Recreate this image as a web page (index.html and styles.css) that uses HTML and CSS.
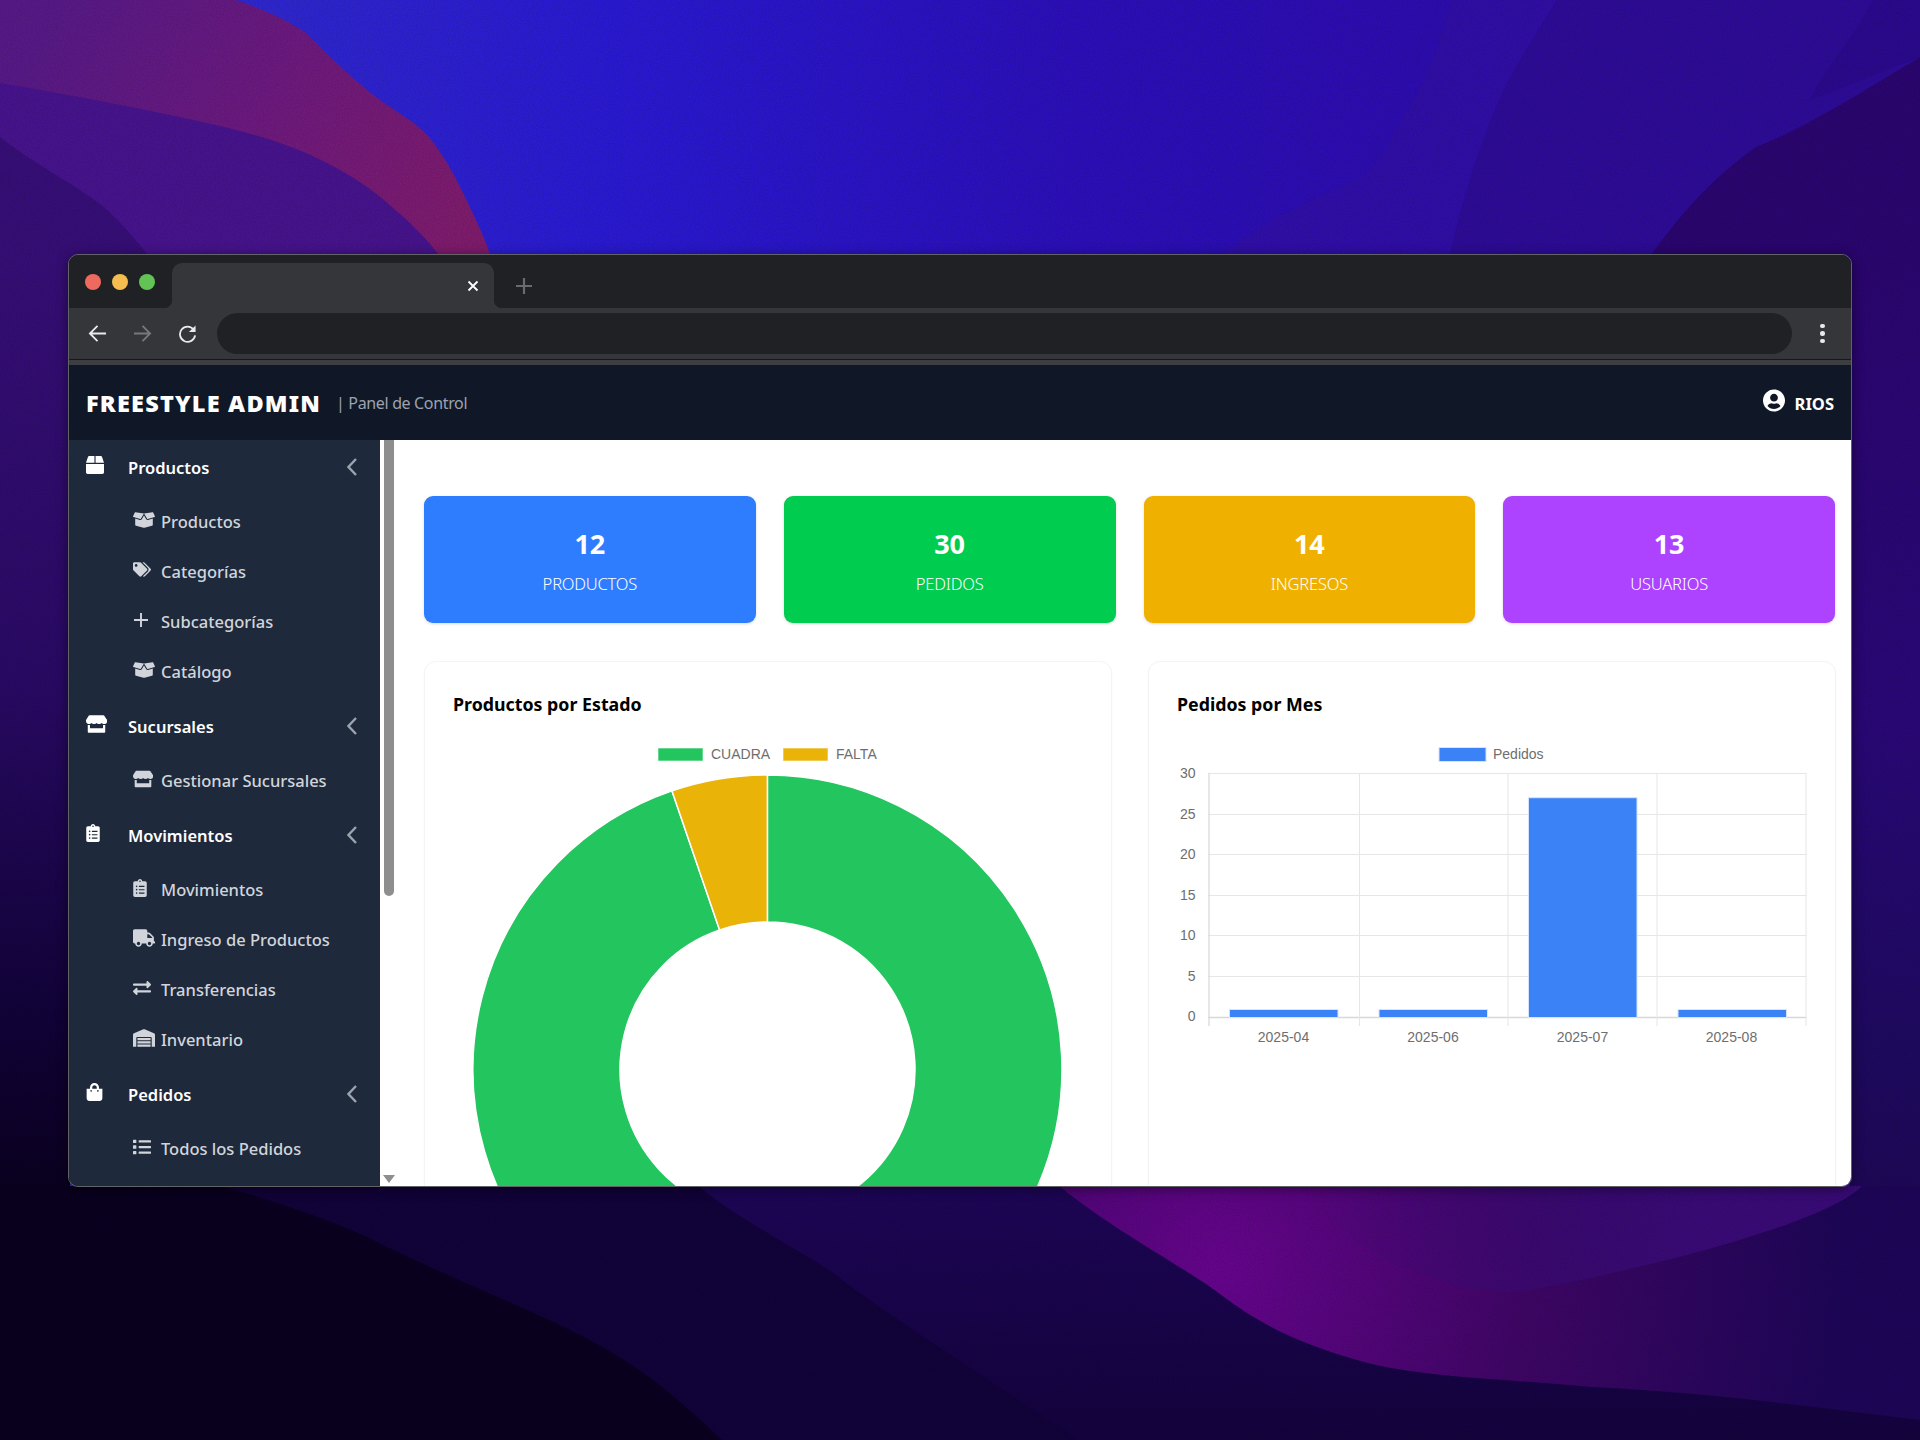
FILE: index.html
```html
<!DOCTYPE html>
<html lang="en">
<head>
  <meta charset="UTF-8">
  <meta name="viewport" content="width=device-width, initial-scale=1.0">
  <title>Freestyle Admin</title>
  <link rel="stylesheet" href="styles.css">
</head>
<body>
  <!-- icon sprite -->
  <svg class="sprite" xmlns="http://www.w3.org/2000/svg">
    <symbol id="i-box" viewBox="0 0 512 512"><path d="M509.5 184.6L458.9 32.8C452.4 13.2 434.1 0 413.4 0H272v192h238.7c-.4-2.5-.4-5-1.2-7.4zM240 0H98.6c-20.7 0-39 13.2-45.5 32.8L2.5 184.6c-.8 2.4-.8 4.9-1.2 7.4H240V0zM0 224v240c0 26.5 21.5 48 48 48h416c26.5 0 48-21.5 48-48V224H0z"/></symbol>
    <symbol id="i-box-open" viewBox="0 0 640 512"><path d="M425.7 256c-16.9 0-32.8-9-41.4-23.4L320 126l-64.2 106.6c-8.7 14.5-24.6 23.5-41.5 23.5-4.5 0-9-.6-13.3-1.9L64 215v178c0 14.7 10 27.5 24.2 31l216.2 54.1c10.2 2.5 20.9 2.5 31 0L551.8 424c14.2-3.6 24.2-16.4 24.2-31V215l-137 39.1c-4.3 1.3-8.8 1.9-13.3 1.9zm212.6-112.2L586.8 41c-3.1-6.2-9.8-9.8-16.7-8.9L320 64l91.7 152.1c3.8 6.3 11.4 9.3 18.5 7.3l197.9-56.5c9.9-2.9 14.7-13.9 10.2-23.1zM53.2 41L1.7 143.8c-4.6 9.2.3 20.2 10.1 23l197.9 56.5c7.1 2 14.7-1 18.5-7.3L320 64 69.8 32.1c-6.9-.8-13.5 2.8-16.6 8.9z"/></symbol>
    <symbol id="i-tags" viewBox="0 0 640 512"><path d="M497.941 225.941L286.059 14.059A48 48 0 0 0 252.118 0H48C21.49 0 0 21.49 0 48v204.118a48 48 0 0 0 14.059 33.941l211.882 211.882c18.744 18.745 49.136 18.746 67.882 0l204.118-204.118c18.745-18.745 18.745-49.137 0-67.882zM112 160c-26.51 0-48-21.49-48-48s21.49-48 48-48 48 21.49 48 48-21.49 48-48 48zm513.941 133.823L421.823 497.941c-18.745 18.745-49.137 18.745-67.882 0l-.36-.36L527.64 323.522c16.999-16.999 26.36-39.6 26.36-63.64s-9.362-46.641-26.36-63.64L331.397 0h48.721a48 48 0 0 1 33.941 14.059l211.882 211.882c18.745 18.745 18.745 49.137 0 67.882z"/></symbol>
    <symbol id="i-plus" viewBox="0 0 16 16"><path d="M8 1v14M1 8h14" fill="none" stroke="currentColor" stroke-width="1.9"/></symbol>
    <symbol id="i-store" viewBox="0 0 616 512"><path d="M602 118.6L537.1 15C531.3 5.7 521 0 510 0H106C95 0 84.7 5.7 78.9 15L14 118.6c-33.9 54.1-3.9 129.3 59.4 137.9 4.6.6 9.2.9 13.8.9 29.9 0 56.4-13.1 74.6-33.4 18.2 20.3 44.8 33.4 74.6 33.4 29.9 0 56.4-13.1 74.6-33.4 18.2 20.3 44.8 33.4 74.6 33.4 29.9 0 56.4-13.1 74.6-33.4 18.3 20.3 44.8 33.4 74.6 33.4 4.7 0 9.2-.3 13.8-.9 63.5-8.5 93.6-83.7 59.6-137.9zM529.5 288c-10 0-19.9-1.5-29.5-3.8V384H116v-99.8c-9.6 2.2-19.5 3.8-29.5 3.8-6 0-12.1-.4-18-1.2-5.6-.8-11.1-2.1-16.4-3.6V480c0 17.7 14.3 32 32 32h448c17.7 0 32-14.3 32-32V283.2c-5.4 1.6-10.8 2.9-16.4 3.6-6.1.8-12.1 1.2-18.2 1.2z"/></symbol>
    <symbol id="i-clipboard" viewBox="0 0 384 512"><path d="M336 64h-80c0-35.3-28.7-64-64-64s-64 28.7-64 64H48C21.5 64 0 85.5 0 112v352c0 26.5 21.5 48 48 48h288c26.5 0 48-21.5 48-48V112c0-26.5-21.5-48-48-48zM96 424c-13.3 0-24-10.7-24-24s10.7-24 24-24 24 10.7 24 24-10.7 24-24 24zm0-96c-13.3 0-24-10.7-24-24s10.7-24 24-24 24 10.7 24 24-10.7 24-24 24zm0-96c-13.3 0-24-10.7-24-24s10.7-24 24-24 24 10.7 24 24-10.7 24-24 24zm96-192c13.3 0 24 10.7 24 24s-10.7 24-24 24-24-10.7-24-24 10.7-24 24-24zm128 368c0 4.4-3.6 8-8 8H168c-4.4 0-8-3.6-8-8v-16c0-4.4 3.6-8 8-8h144c4.4 0 8 3.6 8 8v16zm0-96c0 4.4-3.6 8-8 8H168c-4.4 0-8-3.6-8-8v-16c0-4.4 3.6-8 8-8h144c4.4 0 8 3.6 8 8v16zm0-96c0 4.4-3.6 8-8 8H168c-4.4 0-8-3.6-8-8v-16c0-4.4 3.6-8 8-8h144c4.4 0 8 3.6 8 8v16z"/></symbol>
    <symbol id="i-truck" viewBox="0 0 640 512"><path d="M624 352h-16V243.9c0-12.7-5.1-24.9-14.1-33.9L494 110.1c-9-9-21.2-14.1-33.9-14.1H416V48c0-26.5-21.5-48-48-48H48C21.5 0 0 21.5 0 48v320c0 26.5 21.5 48 48 48h16c0 53 43 96 96 96s96-43 96-96h128c0 53 43 96 96 96s96-43 96-96h48c8.8 0 16-7.2 16-16v-32c0-8.8-7.2-16-16-16zM160 464c-26.5 0-48-21.5-48-48s21.5-48 48-48 48 21.5 48 48-21.5 48-48 48zm320 0c-26.5 0-48-21.5-48-48s21.5-48 48-48 48 21.5 48 48-21.5 48-48 48zm80-208H416V144h44.1l99.9 99.9V256z"/></symbol>
    <symbol id="i-exchange" viewBox="0 0 512 512"><path d="M0 168v-16c0-13.255 10.745-24 24-24h360V80c0-21.367 25.899-32.042 40.971-16.971l80 80c9.372 9.373 9.372 24.569 0 33.941l-80 80C409.956 271.982 384 261.456 384 240v-48H24c-13.255 0-24-10.745-24-24zm488 152H128v-48c0-21.314-25.862-32.08-40.971-16.971l-80 80c-9.372 9.373-9.372 24.569 0 33.941l80 80C102.057 463.997 128 453.437 128 432v-48h360c13.255 0 24-10.745 24-24v-16c0-13.255-10.745-24-24-24z"/></symbol>
    <symbol id="i-warehouse" viewBox="0 0 640 512"><path d="M504 352H136.4c-4.4 0-8 3.6-8 8l-.1 48c0 4.4 3.6 8 8 8H504c4.4 0 8-3.6 8-8v-48c0-4.4-3.6-8-8-8zm0 96H136.1c-4.4 0-8 3.6-8 8l-.1 48c0 4.4 3.6 8 8 8h368c4.4 0 8-3.6 8-8v-48c0-4.4-3.6-8-8-8zm0-192H136.6c-4.4 0-8 3.6-8 8l-.1 48c0 4.4 3.6 8 8 8H504c4.4 0 8-3.6 8-8v-48c0-4.4-3.6-8-8-8zm106.5-139L338.4 3.7a48.15 48.15 0 0 0-36.9 0L29.5 117C11.7 124.5 0 141.9 0 161.3V504c0 4.4 3.6 8 8 8h80c4.4 0 8-3.6 8-8V256c0-17.6 14.6-32 32.6-32h382.8c18 0 32.6 14.4 32.6 32v248c0 4.4 3.6 8 8 8h80c4.4 0 8-3.6 8-8V161.3c0-19.4-11.7-36.8-29.5-44.3z"/></symbol>
    <symbol id="i-bag" viewBox="0 0 448 512"><path d="M352 160v-32C352 57.42 294.579 0 224 0 153.42 0 96 57.42 96 128v32H0v272c0 44.183 35.817 80 80 80h288c44.183 0 80-35.817 80-80V160h-96zm-192-32c0-35.29 28.71-64 64-64s64 28.71 64 64v32H160v-32zm160 120c-13.255 0-24-10.745-24-24s10.745-24 24-24 24 10.745 24 24-10.745 24-24 24zm-192 0c-13.255 0-24-10.745-24-24s10.745-24 24-24 24 10.745 24 24-10.745 24-24 24z"/></symbol>
    <symbol id="i-list" viewBox="0 0 512 512"><path d="M80 368H16a16 16 0 0 0-16 16v64a16 16 0 0 0 16 16h64a16 16 0 0 0 16-16v-64a16 16 0 0 0-16-16zm0-320H16A16 16 0 0 0 0 64v64a16 16 0 0 0 16 16h64a16 16 0 0 0 16-16V64a16 16 0 0 0-16-16zm0 160H16a16 16 0 0 0-16 16v64a16 16 0 0 0 16 16h64a16 16 0 0 0 16-16v-64a16 16 0 0 0-16-16zm416 176H176a16 16 0 0 0-16 16v32a16 16 0 0 0 16 16h320a16 16 0 0 0 16-16v-32a16 16 0 0 0-16-16zm0-320H176a16 16 0 0 0-16 16v32a16 16 0 0 0 16 16h320a16 16 0 0 0 16-16V80a16 16 0 0 0-16-16zm0 160H176a16 16 0 0 0-16 16v32a16 16 0 0 0 16 16h320a16 16 0 0 0 16-16v-32a16 16 0 0 0-16-16z"/></symbol>
    <symbol id="i-user" viewBox="0 0 496 512"><path d="M248 8C111 8 0 119 0 256s111 248 248 248 248-111 248-248S385 8 248 8zm0 96c48.6 0 88 39.4 88 88s-39.4 88-88 88-88-39.4-88-88 39.4-88 88-88zm0 344c-58.7 0-111.3-26.6-146.5-68.2 18.8-35.4 55.6-59.8 98.5-59.8 2.4 0 4.8.4 7.1 1.1 13 4.2 26.6 6.9 40.9 6.9 14.3 0 28-2.7 40.9-6.9 2.3-.7 4.7-1.1 7.1-1.1 42.9 0 79.7 24.4 98.5 59.8C359.3 421.4 306.7 448 248 448z"/></symbol>
    <symbol id="i-chevron" viewBox="0 0 10 18"><path d="M9 1L1.5 9L9 17" fill="none" stroke="currentColor" stroke-width="2.4"/></symbol>
  </svg>

  <div class="desktop">
    <!-- wallpaper -->
    <svg class="wallpaper" viewBox="0 0 1920 1440" preserveAspectRatio="none" xmlns="http://www.w3.org/2000/svg">
      <defs>
        <linearGradient id="skyGrad" gradientUnits="userSpaceOnUse" x1="250" y1="0" x2="1560" y2="0">
          <stop offset="0" stop-color="#3028cf"/>
          <stop offset="0.28" stop-color="#2a1ad4"/>
          <stop offset="0.6" stop-color="#2c10bc"/>
          <stop offset="1" stop-color="#2e0cac"/>
        </linearGradient>
        <linearGradient id="magentaGrad" gradientUnits="userSpaceOnUse" x1="60" y1="0" x2="460" y2="230">
          <stop offset="0" stop-color="#581a88"/>
          <stop offset="0.5" stop-color="#6e1a80"/>
          <stop offset="1" stop-color="#801c6e"/>
        </linearGradient>
        <linearGradient id="edgeGrad" x1="0" y1="0" x2="0" y2="1">
          <stop offset="0" stop-color="#370f78"/>
          <stop offset="0.45" stop-color="#2a0a66"/>
          <stop offset="0.8" stop-color="#12033a"/>
          <stop offset="1" stop-color="#0a0120"/>
        </linearGradient>
        <linearGradient id="rightGrad" x1="0" y1="0" x2="0" y2="1">
          <stop offset="0" stop-color="#2b0670"/>
          <stop offset="0.5" stop-color="#2a0878"/>
          <stop offset="0.85" stop-color="#1e0a60"/>
          <stop offset="1" stop-color="#1e0858"/>
        </linearGradient>
        <linearGradient id="duskGrad" x1="0" y1="0" x2="0" y2="1">
          <stop offset="0" stop-color="#1e0658"/>
          <stop offset="1" stop-color="#14033e"/>
        </linearGradient>
        <radialGradient id="plumGrad" gradientUnits="userSpaceOnUse" cx="1220" cy="1270" r="620">
          <stop offset="0" stop-color="#68058f"/>
          <stop offset="0.5" stop-color="#3f0666"/>
          <stop offset="1" stop-color="#1e0658"/>
        </radialGradient>
        <linearGradient id="haloGrad" gradientUnits="userSpaceOnUse" x1="1300" y1="0" x2="1700" y2="0">
          <stop offset="0" stop-color="#3a0b78" stop-opacity="0"/>
          <stop offset="1" stop-color="#3a0b78"/>
        </linearGradient>
        <filter id="grain" x="0" y="0" width="100%" height="100%">
          <feTurbulence type="fractalNoise" baseFrequency="0.85" numOctaves="2" seed="4"/>
          <feColorMatrix type="matrix" values="0 0 0 0 0  0 0 0 0 0  0 0 0 0 0  0.8 0 0 0 -0.22"/>
        </filter>
      </defs>
      <rect width="1920" height="1440" fill="url(#skyGrad)"/>
      <path d="M1223 254 C1270 215 1320 195 1364 177 C1400 130 1440 60 1450 0 H1920 V300 H1223Z" fill="#3410a0" opacity="0.5"/>
      <path d="M1557 0 C1535 35 1515 65 1499 100 C1478 150 1462 200 1450 254 V300 H1920 V0Z" fill="#2e0c98"/>
      <path d="M1872 0 C1860 30 1830 60 1810 100 L1920 57 V0Z" fill="#2b0a8e"/>
      <path d="M1920 57 C1850 100 1800 130 1756 147 C1710 180 1680 215 1652 254 V300 H1920Z" fill="#2b0670"/>
      <path d="M0 0 H236 C262 9 288 20 306 33 C335 62 358 84 380 100 C398 113 417 123 429 137 C445 157 456 178 465 197 C476 220 484 236 490 254 V300 H0Z" fill="url(#magentaGrad)"/>
      <path d="M0 83 C70 95 140 108 202 122 C240 130 275 140 306 153 C340 168 368 185 392 207 C410 222 426 238 438 254 V300 H0Z" fill="#47148e"/>
      <path d="M0 137 C35 165 72 182 104 207 C120 222 135 238 147 254 V300 H0Z" fill="#370f78"/>
      <rect x="0" y="254" width="70" height="940" fill="url(#edgeGrad)"/>
      <rect x="1850" y="254" width="70" height="940" fill="url(#rightGrad)"/>
      <rect x="0" y="1186" width="1920" height="254" fill="url(#duskGrad)"/>
      <path d="M1059 1186 H1920 V1420 C1800 1405 1700 1392 1592 1387 C1500 1378 1410 1378 1347 1357 C1290 1340 1255 1320 1224 1297 C1190 1270 1120 1235 1059 1186Z" fill="url(#plumGrad)"/>
      <path d="M1300 1186 H1862 C1837 1213 1714 1255 1530 1290 C1450 1300 1340 1250 1300 1186Z" fill="url(#haloGrad)"/>
      <path d="M0 1186 H698 C740 1220 790 1245 833 1273 C900 1325 1000 1385 1077 1440 H0Z" fill="#12033a"/>
      <path d="M0 1186 H220 C290 1205 340 1225 367 1237 C440 1275 560 1320 612 1353 C660 1380 700 1420 722 1440 H0Z" fill="#0a0120"/>
      <rect width="1920" height="1440" filter="url(#grain)" opacity="0.28"/>
    </svg>

    <div class="window">
      <div class="tabstrip">
        <div class="lights">
          <span class="light light-red"></span>
          <span class="light light-yellow"></span>
          <span class="light light-green"></span>
        </div>
        <div class="tab">
          <svg class="tab-close" viewBox="0 0 12 12"><path d="M1.5 1.5l9 9M10.5 1.5l-9 9"/></svg>
        </div>
        <svg class="tab-new" viewBox="0 0 16 16"><path d="M8 0v16M0 8h16"/></svg>
      </div>
      <div class="toolbar">
        <div class="toolbar-nav">
          <svg class="nav-icon" viewBox="0 0 20 20"><path d="M19 10H2M10 2l-8 8 8 8"/></svg>
          <svg class="nav-icon nav-off" viewBox="0 0 20 20"><path d="M1 10h17M10 2l8 8-8 8"/></svg>
          <svg class="nav-icon" viewBox="0 0 20 20"><path d="M16.5 6A8 8 0 1 0 18 12"/><path class="nav-fill" d="M18.5 1.5v7h-7z"/></svg>
        </div>
        <div class="urlbar"></div>
        <div class="dots"><span></span><span></span><span></span></div>
      </div>
      <div class="chrome-line"></div>

      <header class="topbar">
        <div class="brand">
          <span class="brand-name">FREESTYLE ADMIN</span>
          <span class="brand-sub">| Panel de Control</span>
        </div>
        <div class="user">
          <svg class="user-icon"><use href="#i-user"/></svg>
          <span>RIOS</span>
        </div>
      </header>

      <div class="layout">
        <aside class="sidebar">
          <div class="nav-group">
            <div class="nav-head">
              <svg class="head-icon"><use href="#i-box"/></svg>
              <span>Productos</span>
              <svg class="chevron"><use href="#i-chevron"/></svg>
            </div>
            <a class="nav-item"><svg class="item-icon wide"><use href="#i-box-open"/></svg>Productos</a>
            <a class="nav-item"><svg class="item-icon tags"><use href="#i-tags"/></svg>Categorías</a>
            <a class="nav-item"><svg class="item-icon plus"><use href="#i-plus"/></svg>Subcategorías</a>
            <a class="nav-item"><svg class="item-icon wide"><use href="#i-box-open"/></svg>Catálogo</a>
          </div>
          <div class="nav-group">
            <div class="nav-head">
              <svg class="head-icon store"><use href="#i-store"/></svg>
              <span>Sucursales</span>
              <svg class="chevron"><use href="#i-chevron"/></svg>
            </div>
            <a class="nav-item"><svg class="item-icon store"><use href="#i-store"/></svg>Gestionar Sucursales</a>
          </div>
          <div class="nav-group">
            <div class="nav-head">
              <svg class="head-icon narrow"><use href="#i-clipboard"/></svg>
              <span>Movimientos</span>
              <svg class="chevron"><use href="#i-chevron"/></svg>
            </div>
            <a class="nav-item"><svg class="item-icon narrow"><use href="#i-clipboard"/></svg>Movimientos</a>
            <a class="nav-item"><svg class="item-icon wide"><use href="#i-truck"/></svg>Ingreso de Productos</a>
            <a class="nav-item"><svg class="item-icon square"><use href="#i-exchange"/></svg>Transferencias</a>
            <a class="nav-item"><svg class="item-icon wide"><use href="#i-warehouse"/></svg>Inventario</a>
          </div>
          <div class="nav-group">
            <div class="nav-head">
              <svg class="head-icon bag"><use href="#i-bag"/></svg>
              <span>Pedidos</span>
              <svg class="chevron"><use href="#i-chevron"/></svg>
            </div>
            <a class="nav-item"><svg class="item-icon square"><use href="#i-list"/></svg>Todos los Pedidos</a>
          </div>
        </aside>

        <div class="scrollbar">
          <div class="scroll-thumb"></div>
          <div class="scroll-arrow"></div>
        </div>

        <main class="content">
          <section class="stats">
            <div class="stat stat-blue"><div class="stat-num">12</div><div class="stat-label">PRODUCTOS</div></div>
            <div class="stat stat-green"><div class="stat-num">30</div><div class="stat-label">PEDIDOS</div></div>
            <div class="stat stat-amber"><div class="stat-num">14</div><div class="stat-label">INGRESOS</div></div>
            <div class="stat stat-purple"><div class="stat-num">13</div><div class="stat-label">USUARIOS</div></div>
          </section>

          <section class="charts">
            <div class="card">
              <h2 class="card-title">Productos por Estado</h2>
              <svg class="chart" viewBox="0 0 630 650">
                <rect class="swatch-green" x="205" y="18" width="45" height="13"/>
                <text class="chart-text" x="258" y="29">CUADRA</text>
                <rect class="swatch-amber" x="330" y="18" width="45" height="13"/>
                <text class="chart-text" x="383" y="29">FALTA</text>
                <path class="arc-green" d="M314.400 45 A294.500 294.500 0 1 1 219 60.900 L266.600 200 A147.500 147.500 0 1 0 314.400 192 Z"/>
                <path class="arc-amber" d="M219 60.900 A294.500 294.500 0 0 1 314.400 45 L314.400 192 A147.500 147.500 0 0 0 266.600 200 Z"/>
              </svg>
            </div>
            <div class="card">
              <h2 class="card-title">Pedidos por Mes</h2>
              <svg class="chart" viewBox="0 0 629 650">
                <rect class="swatch-blue" x="261.500" y="17.500" width="47" height="14"/>
                <text class="chart-text" x="315.500" y="29">Pedidos</text>
                <g class="grid-h">
                  <line x1="31" x2="629" y1="43.500" y2="43.500"/>
                  <line x1="31" x2="629" y1="84.500" y2="84.500"/>
                  <line x1="31" x2="629" y1="124.500" y2="124.500"/>
                  <line x1="31" x2="629" y1="165.500" y2="165.500"/>
                  <line x1="31" x2="629" y1="205.500" y2="205.500"/>
                  <line x1="31" x2="629" y1="246.500" y2="246.500"/>
                  <line class="axis" x1="31" x2="629" y1="287.500" y2="287.500"/>
                </g>
                <g class="grid-v">
                  <line class="axis" x1="31.500" x2="31.500" y1="43" y2="296"/>
                  <line x1="182" x2="182" y1="43" y2="296"/>
                  <line x1="330.500" x2="330.500" y1="43" y2="296"/>
                  <line x1="479.500" x2="479.500" y1="43" y2="296"/>
                  <line x1="628.500" x2="628.500" y1="43" y2="296"/>
                </g>
                <rect class="bar" x="52" y="279.500" width="108.500" height="8"/>
                <rect class="bar" x="201.500" y="279.500" width="108.500" height="8"/>
                <rect class="bar" x="351" y="67.700" width="108.500" height="219.800"/>
                <rect class="bar" x="500.500" y="279.500" width="108.500" height="8"/>
                <g class="chart-text tick-y">
                  <text x="18" y="48">30</text>
                  <text x="18" y="89">25</text>
                  <text x="18" y="129">20</text>
                  <text x="18" y="170">15</text>
                  <text x="18" y="210">10</text>
                  <text x="18" y="251">5</text>
                  <text x="18" y="291">0</text>
                </g>
                <g class="chart-text tick-x">
                  <text x="106" y="312">2025-04</text>
                  <text x="255.500" y="312">2025-06</text>
                  <text x="405" y="312">2025-07</text>
                  <text x="554" y="312">2025-08</text>
                </g>
              </svg>
            </div>
          </section>
        </main>
      </div>
    </div>
  </div>
</body>
</html>
```

FILE: styles.css
```css
* {
  box-sizing: border-box;
}
body {
  margin: 0;
  font-family: "Noto Sans", "Open Sans", sans-serif;
  background-color: #0a0120;
}
.sprite {
  display: none;
}
.desktop {
  position: relative;
  width: 1920px;
  height: 1440px;
  padding: 254px 68px 0 68px;
  overflow: hidden;
}
.wallpaper {
  position: absolute;
  top: 0;
  left: 0;
  width: 1920px;
  height: 1440px;
}

/* browser window */
.window {
  position: relative;
  display: flex;
  flex-direction: column;
  height: 933px;
  border: 1px solid #626366;
  border-radius: 10px;
  overflow: hidden;
  box-shadow: 0 2px 12px rgba(0, 0, 0, 0.45);
}
.tabstrip {
  display: flex;
  align-items: flex-end;
  height: 53px;
  background-color: #202124;
  flex-shrink: 0;
}
.lights {
  display: flex;
  gap: 11px;
  align-self: flex-start;
  padding: 19px 0 0 16px;
  width: 103px;
}
.light {
  width: 16px;
  height: 16px;
  border-radius: 50%;
}
.light-red { background-color: #ee6a5f; }
.light-yellow { background-color: #f5bd4f; }
.light-green { background-color: #61c454; }
.tab {
  position: relative;
  width: 322px;
  height: 45px;
  background-color: #35363a;
  border-radius: 10px 10px 0 0;
}
.tab::before,
.tab::after {
  content: "";
  position: absolute;
  bottom: 0;
  width: 8px;
  height: 8px;
}
.tab::before {
  left: -8px;
  background: radial-gradient(circle at 0 0, #202124 8px, #35363a 8.5px);
}
.tab::after {
  right: -8px;
  background: radial-gradient(circle at 100% 0, #202124 8px, #35363a 8.5px);
}
.tab-close {
  position: absolute;
  top: 17px;
  right: 15px;
  width: 12px;
  height: 12px;
  fill: none;
  stroke: #fff;
  stroke-width: 1.8;
}
.tab-new {
  width: 16px;
  height: 16px;
  margin: 0 0 14px 22px;
  fill: none;
  stroke: #6a6b6e;
  stroke-width: 2.2;
}
.toolbar {
  display: flex;
  align-items: center;
  height: 51px;
  background-color: #35363a;
  flex-shrink: 0;
}
.toolbar-nav {
  display: flex;
  gap: 26px;
  padding-left: 19px;
  width: 148px;
}
.nav-icon {
  width: 19px;
  height: 19px;
  fill: none;
  stroke: #e8eaed;
  stroke-width: 1.9;
}
.nav-off {
  stroke: #77787b;
}
.nav-fill {
  fill: #e8eaed;
  stroke: none;
}
.urlbar {
  width: 1575px;
  height: 41px;
  border-radius: 21px;
  background-color: #202124;
}
.dots {
  display: flex;
  flex-direction: column;
  align-items: center;
  gap: 3px;
  margin-left: 28px;
}
.dots span {
  width: 4.500px;
  height: 4.500px;
  border-radius: 50%;
  background-color: #e8eaed;
}
.chrome-line {
  height: 6px;
  background-color: #3d3e41;
  border-top: 1px solid #17181a;
  flex-shrink: 0;
}

/* app header */
.topbar {
  display: flex;
  justify-content: space-between;
  align-items: center;
  height: 75px;
  padding: 0 17px;
  background-color: #101828;
  flex-shrink: 0;
}
.brand {
  display: flex;
  align-items: center;
  gap: 15px;
}
.brand-name {
  font-size: 23.500px;
  font-weight: 900;
  letter-spacing: 1.200px;
  color: #fff;
}
.brand-sub {
  font-size: 16px;
  letter-spacing: -0.350px;
  color: #9ca3af;
}
.user {
  display: flex;
  align-items: center;
  gap: 10px;
  font-size: 16.500px;
  font-weight: 700;
  color: #fff;
}
.user span {
  padding-top: 2px;
}
.user-icon {
  width: 22px;
  height: 23px;
  margin-top: -5px;
  fill: #fff;
}

/* body */
.layout {
  display: flex;
  flex: 1;
  min-height: 0;
}
.sidebar {
  width: 311px;
  flex-shrink: 0;
  padding: 3px 0 0 1px;
  background-color: #1e293b;
  overflow: hidden;
}
.nav-group {
  margin-bottom: 5px;
}
.nav-head {
  position: relative;
  display: flex;
  align-items: center;
  height: 50px;
  margin-bottom: 4px;
  padding: 0 0 2px 16px;
  font-size: 16.500px;
  font-weight: 600;
  color: #fff;
}
.head-icon {
  width: 18px;
  height: 18px;
  margin: -5px 24px 0 0;
  fill: #fff;
}
.head-icon.store {
  width: 21px;
  margin-right: 21px;
}
.head-icon.narrow {
  width: 14px;
  margin-right: 28px;
}
.head-icon.bag {
  width: 17px;
  margin-right: 25px;
}
.chevron {
  position: absolute;
  top: 15px;
  right: 23px;
  width: 10px;
  height: 18px;
  color: #9ca3af;
}
.nav-item {
  display: flex;
  align-items: center;
  height: 50px;
  padding: 0 0 2px 63px;
  font-size: 16.500px;
  font-weight: 500;
  color: #d1d5db;
}
.item-icon {
  flex-shrink: 0;
  width: 18px;
  height: 18px;
  margin: -3px 10px 0 0;
  fill: #d1d5db;
  color: #d1d5db;
}
.item-icon.wide {
  width: 22px;
  margin-right: 6px;
}
.item-icon.tags {
  height: 15px;
  margin-right: 10px;
}
.item-icon.store {
  width: 20px;
  margin-right: 8px;
}
.item-icon.narrow {
  width: 14px;
  margin-right: 14px;
}
.item-icon.square {
  width: 18px;
  margin-right: 10px;
}
.item-icon.plus {
  width: 16px;
  height: 16px;
  margin: -3px 12px 0 0;
}

.scrollbar {
  position: relative;
  width: 15px;
  flex-shrink: 0;
  background-color: #fff;
}
.scroll-thumb {
  width: 10px;
  height: 456px;
  margin-left: 4px;
  border-radius: 0 0 5px 5px;
  background-color: #8e8e8e;
}
.scroll-arrow {
  position: absolute;
  bottom: 3px;
  left: 3px;
  width: 0;
  height: 0;
  border-left: 6px solid transparent;
  border-right: 6px solid transparent;
  border-top: 8px solid #8e8e8e;
}

/* main content */
.content {
  flex: 1;
  min-width: 0;
  padding: 56px 16px 0 29px;
  background-color: #fff;
  overflow: hidden;
}
.stats {
  display: grid;
  grid-template-columns: repeat(4, 1fr);
  gap: 28px;
  margin-bottom: 38px;
}
.stat {
  height: 127px;
  padding-top: 28px;
  border-radius: 9px;
  text-align: center;
  color: #fff;
  box-shadow: 0 1px 3px rgba(0, 0, 0, 0.15);
}
.stat-blue { background-color: #2e7dff; }
.stat-green { background-color: #00cc4f; }
.stat-amber { background-color: #f0b000; }
.stat-purple { background-color: #ad42ff; }
.stat-num {
  font-size: 27px;
  line-height: 40px;
  font-weight: 700;
}
.stat-label {
  margin-top: 5px;
  font-size: 16.500px;
  line-height: 30px;
  font-weight: 300;
  letter-spacing: -0.200px;
}
.charts {
  display: grid;
  grid-template-columns: 1fr 1fr;
  gap: 36px;
}
.card {
  height: 720px;
  padding: 30px 28px 0;
  border: 1px solid #f3f4f6;
  border-radius: 12px;
  background-color: #fff;
  box-shadow: 0 1px 2px rgba(0, 0, 0, 0.03);
}
.card-title {
  margin: 0 0 14px;
  font-size: 17.800px;
  line-height: 24px;
  font-weight: 700;
  color: #000;
}
.chart {
  display: block;
  width: 630px;
  height: 650px;
}
.chart-text {
  font-family: "Liberation Sans", Arial, sans-serif;
  font-size: 14px;
  fill: #6e6e6e;
}
.tick-y text {
  text-anchor: end;
}
.tick-x text {
  text-anchor: middle;
}
.swatch-green,
.arc-green {
  fill: #22c55e;
  stroke: #fff;
  stroke-width: 1.500;
}
.swatch-green,
.swatch-amber {
  stroke-width: 1;
  stroke-opacity: 0.6;
}
.swatch-amber,
.arc-amber {
  fill: #eab308;
  stroke: #fff;
  stroke-width: 1.500;
}
.swatch-amber {
  stroke-width: 1;
}
.swatch-blue,
.bar {
  fill: #3b82f6;
  stroke: #d5e4fb;
  stroke-width: 1;
}
.grid-h line,
.grid-v line {
  stroke: #e6e6e6;
  stroke-width: 1;
}
.grid-h .axis {
  stroke: #d8d8d8;
  stroke-width: 1.500;
}
.grid-v .axis {
  stroke: #cfcfcf;
}
```
